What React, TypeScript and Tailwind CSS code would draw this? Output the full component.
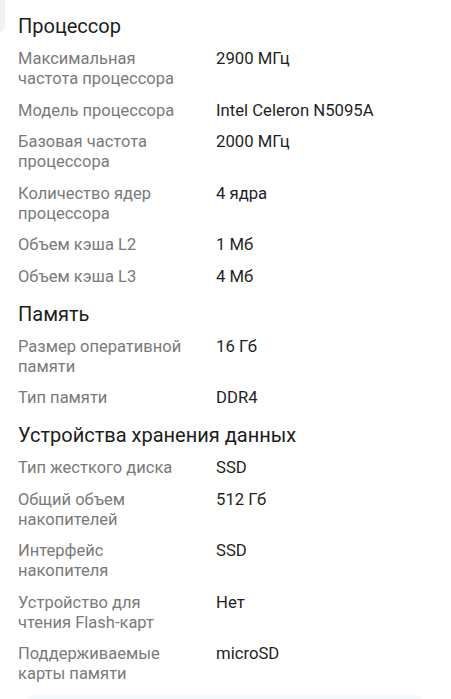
import React from "react";

type Row = [string, string];
type Section = { title: string; rows: Row[] };

const sections: Section[] = [
  {
    title: "Процессор",
    rows: [
      ["Максимальная частота процессора", "2900 МГц"],
      ["Модель процессора", "Intel Celeron N5095A"],
      ["Базовая частота процессора", "2000 МГц"],
      ["Количество ядер процессора", "4 ядра"],
      ["Объем кэша L2", "1 Мб"],
      ["Объем кэша L3", "4 Мб"],
    ],
  },
  {
    title: "Память",
    rows: [
      ["Размер оперативной памяти", "16 Гб"],
      ["Тип памяти", "DDR4"],
    ],
  },
  {
    title: "Устройства хранения данных",
    rows: [
      ["Тип жесткого диска", "SSD"],
      ["Общий объем накопителей", "512 Гб"],
      ["Интерфейс накопителя", "SSD"],
      ["Устройство для чтения Flash-карт", "Нет"],
      ["Поддерживаемые карты памяти", "microSD"],
    ],
  },
];

export default function App() {
  return (
    <div
      className="relative w-[451px] h-[699px] overflow-hidden bg-white"
      style={{ fontFamily: "Roboto, 'Noto Sans', sans-serif" }}
    >
      <div className="absolute left-[-10px] top-[-10px] w-[15px] h-[42px] rounded-[6px] bg-[#f2f2f2]" />
      <div className="flex flex-col pl-[18px] pt-[12px]">
        {sections.map((s, si) => (
          <div key={s.title} className={si === 0 ? "flex flex-col" : "flex flex-col mt-[13px]"}>
            <h2 className="text-[20px] leading-[28px] text-[#1c1c1c] font-normal mb-[9px]">
              {s.title}
            </h2>
            <div className="flex flex-col gap-[11.5px]">
              {s.rows.map(([k, v]) => (
                <div key={k} className="flex text-[16.5px] leading-[20px]">
                  <div className="w-[168px] shrink-0 text-[#7a7a7a]">{k}</div>
                  <div className="ml-[30px] text-[16.7px] text-[#1f1f1f]">{v}</div>
                </div>
              ))}
            </div>
          </div>
        ))}
      </div>
      <div className="absolute left-[25px] right-[26px] top-[695px] h-[20px] rounded-t-[10px] bg-[#f4fafb]" />
    </div>
  );
}
